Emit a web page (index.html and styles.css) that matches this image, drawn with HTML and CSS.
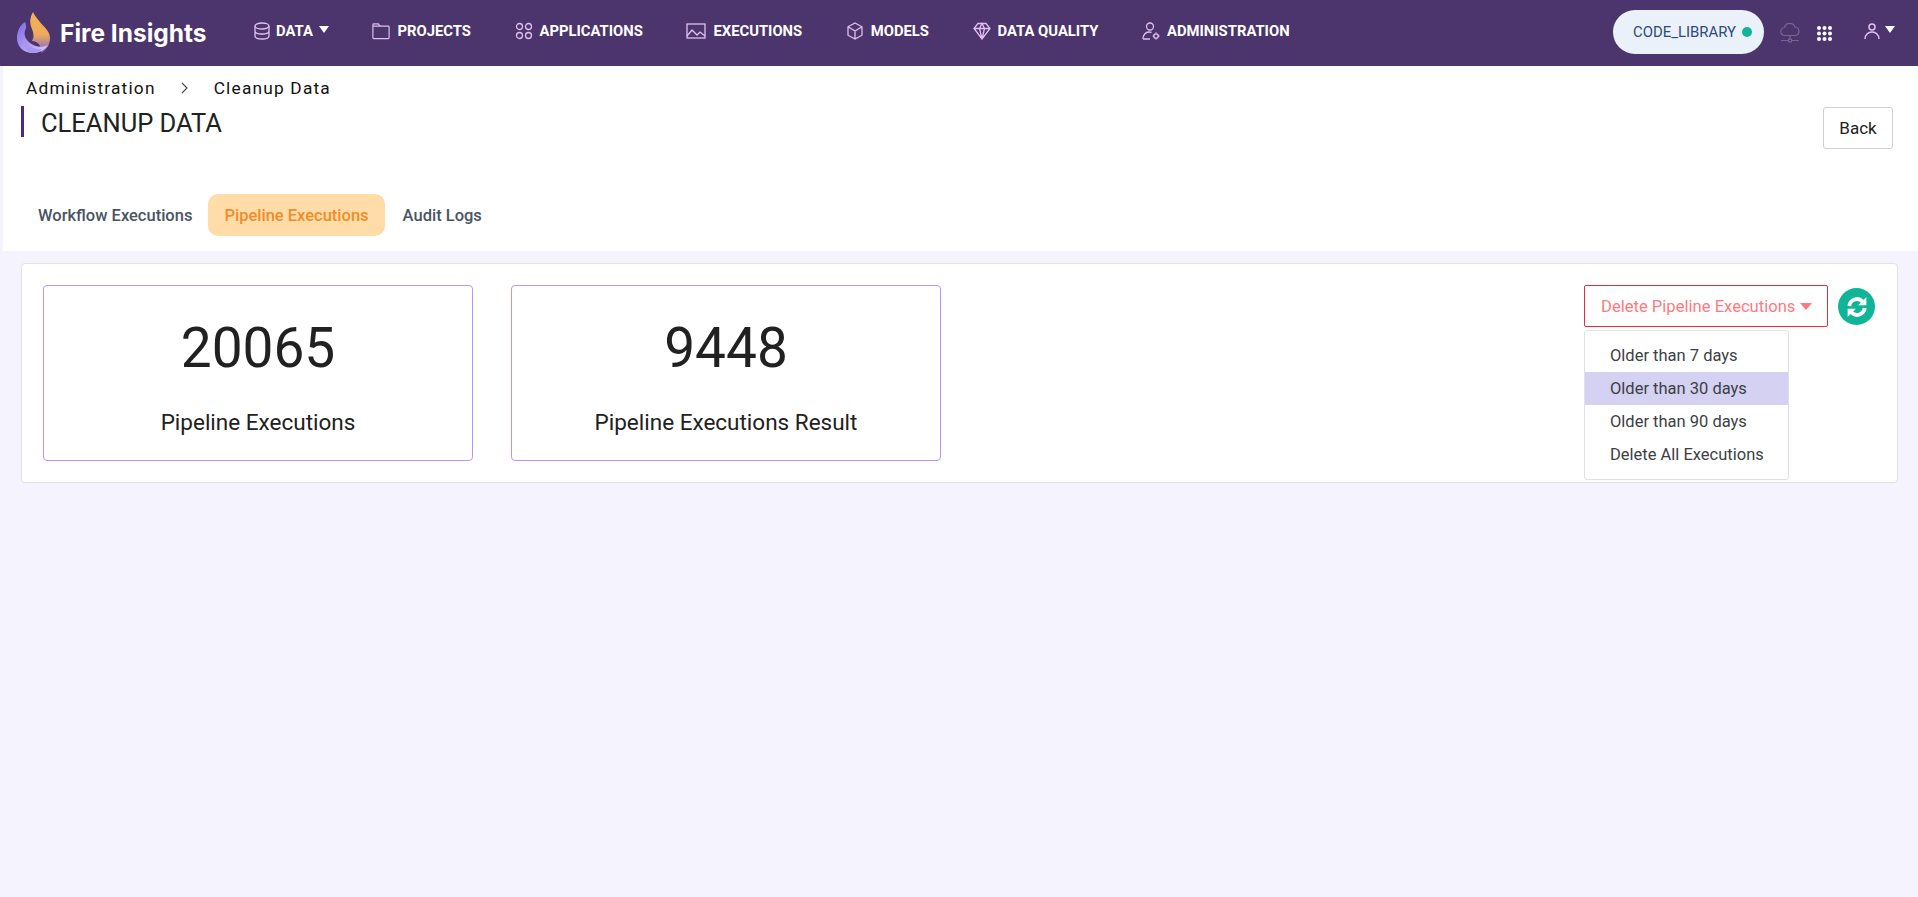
FILE: index.html
```html
<!DOCTYPE html>
<html lang="en">
<head>
    <meta charset="UTF-8">
    <title>Cleanup Data</title>
    <link rel="stylesheet" href="styles.css">
</head>
<body>

<!-- Top navigation -->
<nav class="topbar">
    <a class="brand">
        <svg class="brand-logo" viewBox="0 0 34 42" width="34" height="42">
            <defs>
                <linearGradient id="flame" x1="0" y1="0" x2="0" y2="1">
                    <stop offset="0" stop-color="#f7b04f"/>
                    <stop offset="0.55" stop-color="#eeaa5e"/>
                    <stop offset="1" stop-color="#7d5ce0"/>
                </linearGradient>
                <linearGradient id="drop" x1="0" y1="0" x2="1" y2="1">
                    <stop offset="0" stop-color="#7f63e8"/>
                    <stop offset="1" stop-color="#d9d0f7"/>
                </linearGradient>
            </defs>
            <path d="M16 0C12 7 13 12 15 17C17 22 17 26 15 29C20 29 25 33 24 41C30 38 33 32 33 26C33 17 22 12 16 0z" fill="url(#flame)"/>
            <path d="M8 10C2 14 0 20 0 26C0 35 7 41 16 41C22 41 28 38 31 33C25 36 18 35 13 31C8 27 6 22 9 16C9 13 9 12 8 10z" fill="url(#drop)"/>
            <path d="M6 26C9 33 16 38 25 37C22 40 19 41 16 41C10 41 6 35 6 26z" fill="#a996ee"/>
        </svg>
        <span class="brand-name">Fire Insights</span>
    </a>

    <ul class="menu">
        <li class="menu-item">
            <svg class="menu-icon" viewBox="0 0 18 18"><ellipse cx="9" cy="4" rx="7" ry="3"/><path d="M2 4v10c0 1.700 3 3 7 3s7-1.300 7-3V4M2 9c0 1.700 3 3 7 3s7-1.300 7-3"/></svg>
            <span>DATA</span><i class="caret caret-gap"></i>
        </li>
        <li class="menu-item">
            <svg class="menu-icon" viewBox="0 0 20 18"><path d="M1 16.500V2a1 1 0 0 1 1-1h5l2 2.500h9a1 1 0 0 1 1 1v12a1 1 0 0 1-1 1H2a1 1 0 0 1-1-1zM1 3.500h8"/></svg>
            <span>PROJECTS</span>
        </li>
        <li class="menu-item">
            <svg class="menu-icon" viewBox="0 0 18 18"><circle cx="4.500" cy="4.500" r="3"/><circle cx="13.500" cy="4.500" r="3"/><circle cx="4.500" cy="13.500" r="3"/><circle cx="13.500" cy="13.500" r="3"/></svg>
            <span>APPLICATIONS</span>
        </li>
        <li class="menu-item">
            <svg class="menu-icon icon-wide" viewBox="0 0 20 16"><rect x="1" y="1" width="18" height="14"/><path d="M1 13l5-6 5 5 3-3 5 4"/></svg>
            <span>EXECUTIONS</span>
        </li>
        <li class="menu-item">
            <svg class="menu-icon" viewBox="0 0 18 18"><path d="M9 1l7 3.800v8.400L9 17l-7-3.800V4.800zM2 4.800L9 9l7-4.200M9 9v8"/></svg>
            <span>MODELS</span>
        </li>
        <li class="menu-item">
            <svg class="menu-icon" viewBox="0 0 18 18"><path d="M5 1.500h8l4 5L9 17 1 6.500zM1 6.500h16M6.500 6.500L9 17l2.500-10.500M6.500 6.500L9 1.500l2.500 5"/></svg>
            <span>DATA QUALITY</span>
        </li>
        <li class="menu-item">
            <svg class="menu-icon" viewBox="0 0 18 18"><circle cx="8" cy="4.500" r="3.500"/><path d="M1 17c0-4 2.500-7 6-7 1 0 2 .2 2.500.6M1 17h7"/><circle cx="14" cy="14" r="2.200"/><path d="M14 10.500v1.300M14 16.200v1.300M10.700 14H12M16 14h1.500"/></svg>
            <span>ADMINISTRATION</span>
        </li>
    </ul>

    <div class="topbar-right">
        <div class="workspace-pill">CODE_LIBRARY<i class="status-dot"></i></div>
        <svg class="cloud-icon" viewBox="0 0 20 20"><path d="M5 12.500a4 4 0 0 1-.5-8A5.500 5.500 0 0 1 15 4a4.300 4.300 0 0 1 .5 8.500zM10 12.500v4M1 17.500h7M12 17.500h7"/><circle cx="10" cy="17.500" r="1.700"/></svg>
        <svg class="apps-icon" viewBox="0 0 15 15">
            <circle cx="2" cy="2" r="2"/><circle cx="7.500" cy="2" r="2"/><circle cx="13" cy="2" r="2"/>
            <circle cx="2" cy="7.500" r="2"/><circle cx="7.500" cy="7.500" r="2"/><circle cx="13" cy="7.500" r="2"/>
            <circle cx="2" cy="13" r="2"/><circle cx="7.500" cy="13" r="2"/><circle cx="13" cy="13" r="2"/>
        </svg>
        <div class="user-menu">
            <svg class="user-icon" viewBox="0 0 16 16"><circle cx="8" cy="4" r="3"/><path d="M1 16c0-4 3-7 7-7s7 3 7 7"/></svg>
            <i class="caret"></i>
        </div>
    </div>
</nav>

<!-- Page header -->
<header class="page-head">
    <div class="breadcrumb">
        <span>Administration</span>
        <svg class="crumb-sep" viewBox="0 0 8 12" width="8" height="12"><path d="M1 1l5 5-5 5"/></svg>
        <span>Cleanup Data</span>
    </div>
    <div class="title-row">
        <h1 class="page-title">CLEANUP DATA</h1>
        <button class="back-btn" type="button">Back</button>
    </div>
    <div class="tabs">
        <a class="tab">Workflow Executions</a>
        <a class="tab active">Pipeline Executions</a>
        <a class="tab">Audit Logs</a>
    </div>
</header>

<!-- Counters -->
<main class="panel">
    <div class="stat-card">
        <div class="stat-value">20065</div>
        <div class="stat-label">Pipeline Executions</div>
    </div>
    <div class="stat-card">
        <div class="stat-value">9448</div>
        <div class="stat-label">Pipeline Executions Result</div>
    </div>

    <div class="actions">
        <div class="delete-wrap">
            <button class="delete-btn" type="button">Delete Pipeline Executions<i class="caret caret-red"></i></button>
            <ul class="dropdown">
                <li>Older than 7 days</li>
                <li class="hover">Older than 30 days</li>
                <li>Older than 90 days</li>
                <li>Delete All Executions</li>
            </ul>
        </div>
        <button class="refresh-btn" type="button">
            <svg viewBox="0 0 20 20" width="22" height="22"><path d="M3 9a7 7 0 0 1 12-4M17 11a7 7 0 0 1-12 4"/><path class="arrow-head" d="M18.500 1v7.500H11zM1.500 19v-7.500H9z"/></svg>
        </button>
    </div>
</main>

</body>
</html>
```

FILE: styles.css
```css
* {
    box-sizing: border-box;
}

body {
    margin: 0;
    font-family: 'Roboto', 'Liberation Sans', sans-serif;
    background-color: #f4f3fe;
    color: #212121;
    min-height: 100vh;
}

ul {
    list-style: none;
    margin: 0;
    padding: 0;
}

/* Top navigation */
.topbar {
    display: flex;
    align-items: center;
    height: 66px;
    padding-left: 17px;
    background-color: #4b356c;
    color: #fff;
}

.brand {
    display: flex;
    align-items: center;
    gap: 9px;
    margin-right: 47px;
}

.brand-logo {
    flex: none;
}

.brand-name {
    font-family: 'Inter', sans-serif;
    font-size: 24.5px;
    font-weight: 700;
    width: 146px;
    white-space: nowrap;
}

.menu {
    display: flex;
    align-items: center;
    gap: 43.6px;
    margin-top: -4px;
}

.menu-item {
    display: flex;
    align-items: center;
    gap: 7px;
    font-size: 14.8px;
    font-weight: 700;
    white-space: nowrap;
}

.menu-item:first-child {
    gap: 5px;
}

.menu-icon {
    width: 18px;
    height: 18px;
    fill: none;
    stroke: #e2bff0;
    stroke-width: 1.3;
    flex: none;
}

.icon-wide {
    width: 20px;
}

.caret {
    display: inline-block;
    width: 0;
    height: 0;
    border-left: 5px solid transparent;
    border-right: 5px solid transparent;
    border-top: 7px solid #fff;
}

.caret-gap {
    margin: -4px 0 0 1px;
}

.topbar-right {
    display: flex;
    align-items: center;
    margin-left: auto;
    padding-right: 23px;
}

.workspace-pill {
    display: flex;
    align-items: center;
    gap: 6px;
    width: 151px;
    height: 44px;
    margin-top: -2px;
    padding-left: 20px;
    border-radius: 22px;
    background-color: #eaf1f9;
    color: #2c4a80;
    font-size: 14.9px;
    white-space: nowrap;
}

.status-dot {
    width: 10px;
    height: 10px;
    border-radius: 50%;
    background-color: #10b597;
}

.cloud-icon {
    width: 20px;
    height: 20px;
    margin-left: 16px;
    fill: none;
    stroke: #7a658f;
    stroke-width: 1.2;
}

.apps-icon {
    width: 15px;
    height: 15px;
    margin-left: 17px;
    fill: #fff;
}

.user-menu {
    display: flex;
    align-items: flex-start;
    gap: 5px;
    margin-left: 32px;
    margin-top: -4px;
}

.user-icon {
    width: 16px;
    height: 16px;
    fill: none;
    stroke: #e2bff0;
    stroke-width: 1.5;
}

.user-menu .caret {
    margin-top: 3px;
}

/* Page header */
.page-head {
    height: 185px;
    margin-left: 3px;
    padding-top: 11px;
    background-color: #fff;
}

.breadcrumb {
    display: flex;
    align-items: center;
    gap: 25px;
    padding-left: 23px;
    font-size: 17.3px;
    line-height: 22px;
    letter-spacing: 1.2px;
    color: #111;
}

.crumb-sep {
    fill: none;
    stroke: #444;
    stroke-width: 1.1;
}

.title-row {
    display: flex;
    justify-content: space-between;
    align-items: flex-start;
    height: 55px;
    padding: 0 25px 0 18px;
    margin-top: 7px;
}

.page-title {
    margin: 0;
    height: 31px;
    padding-left: 17px;
    border-left: 3px solid #4b2a86;
    font-size: 25.5px;
    font-weight: 400;
    line-height: 34px;
    color: #212121;
}

.back-btn {
    width: 70px;
    height: 42px;
    margin-top: 1px;
    border: 1px solid #ccd2dc;
    border-radius: 3px;
    background-color: #fff;
    font-family: inherit;
    font-size: 17px;
    color: #212121;
}

.tabs {
    display: flex;
    margin-top: 33px;
    padding-left: 19px;
}

.tab {
    height: 42px;
    padding: 0 16px;
    border-radius: 10px;
    font-size: 16.5px;
    font-weight: 500;
    line-height: 43px;
    color: #495463;
}

.tab.active {
    margin-right: 2px;
    background-color: #ffdca8;
    color: #f28c28;
}

/* Counters */
.panel {
    display: flex;
    align-items: flex-start;
    gap: 38px;
    height: 220px;
    margin: 12px 20px 0 21px;
    padding: 21px;
    border: 1px solid #e1e1e8;
    border-radius: 4px;
    background-color: #fff;
}

.stat-card {
    width: 430px;
    height: 176px;
    border: 1px solid #b994fa;
    border-radius: 4px;
    text-align: center;
}

.stat-value {
    margin-top: 30px;
    font-size: 55px;
    line-height: 64px;
    color: #212121;
}

.stat-label {
    margin-top: 27px;
    font-size: 22.5px;
    line-height: 30px;
    color: #212121;
}

.actions {
    display: flex;
    align-items: flex-start;
    gap: 10px;
    margin-left: auto;
    padding-right: 1px;
}

.delete-wrap {
    position: relative;
}

.delete-btn {
    display: flex;
    align-items: center;
    gap: 5px;
    width: 244px;
    height: 42px;
    padding: 0 16px;
    border: 1px solid #e92c35;
    border-radius: 2px;
    background-color: #fff;
    font-family: inherit;
    font-size: 16.6px;
    color: #ff7a7f;
    white-space: nowrap;
}

.caret-red {
    border-left-width: 6px;
    border-right-width: 6px;
    border-top-color: #ff7a7f;
}

.dropdown {
    position: absolute;
    top: 45px;
    left: 0;
    width: 205px;
    height: 150px;
    padding-top: 8px;
    border: 1px solid #e2e2e6;
    border-radius: 3px;
    background-color: #fff;
}

.dropdown li {
    height: 33px;
    padding-left: 25px;
    font-size: 16.5px;
    line-height: 33px;
    color: #3d3f45;
    white-space: nowrap;
}

.dropdown li.hover {
    background-color: #d4d1f3;
}

.refresh-btn {
    display: flex;
    align-items: center;
    justify-content: center;
    width: 37px;
    height: 37px;
    margin-top: 3px;
    padding: 0;
    border: none;
    border-radius: 50%;
    background-color: #10b597;
}

.refresh-btn svg {
    fill: none;
    stroke: #fff;
    stroke-width: 3.5;
}

.refresh-btn .arrow-head {
    fill: #fff;
    stroke: none;
}
```
